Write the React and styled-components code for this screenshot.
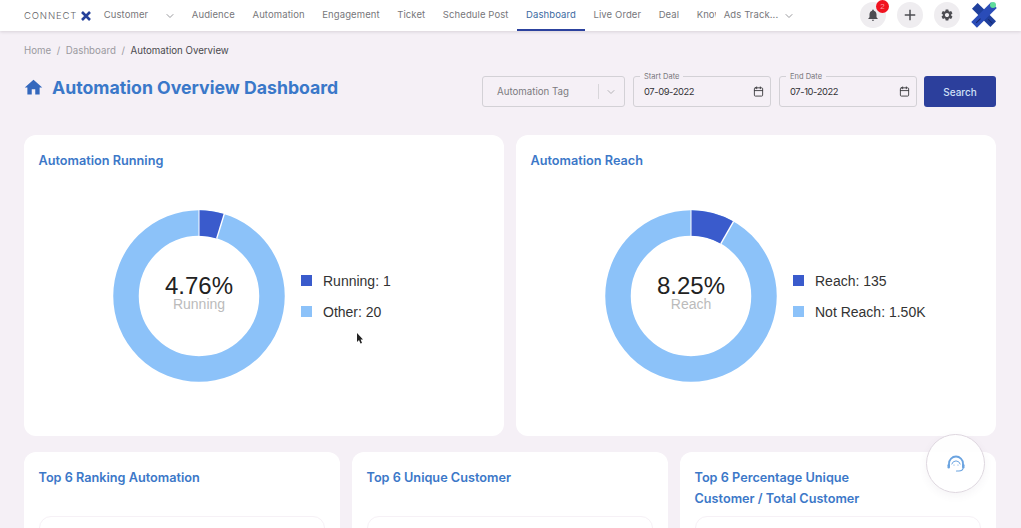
import styled, { createGlobalStyle } from "styled-components";
import { MdHome, MdNotifications, MdSettings, MdAdd } from "react-icons/md";
import { ChevronDown, Calendar } from "lucide-react";

const GlobalStyle = createGlobalStyle`
  html, body {
    margin: 0;
    height: 528px;
    overflow: hidden;
    background: #f5f0f6;
    font-family: "Inter", "Liberation Sans", sans-serif;
  }
  * { box-sizing: border-box; }
`;

const Page = styled.div`
  height: 528px;
  overflow: hidden;
  background: #f5f0f6;
`;

const NavBar = styled.header`
  display: flex;
  align-items: center;
  height: 31px;
  padding: 0 0 0 24px;
  background: #fff;
  box-shadow: 0 1px 3px rgba(60, 50, 70, 0.16);
`;

const Brand = styled.div`
  display: flex;
  align-items: center;
  gap: 4px;
  width: 71px;
  flex-shrink: 0;
  font-size: 9.5px;
  font-weight: 300;
  letter-spacing: 0.85px;
  color: #5f5f64;
`;

const NavTabs = styled.nav`
  display: flex;
  align-items: center;
  height: 31px;
  flex-shrink: 0;
`;

const NavTab = styled.a`
  display: flex;
  align-items: center;
  height: 31px;
  padding: 0 8.75px;
  font-size: 9.5px;
  letter-spacing: 0.1px;
  white-space: nowrap;
  overflow: hidden;
  color: ${(p) => (p.$active ? "#3c6a9f" : "#77777b")};
  border-bottom: 2px solid ${(p) => (p.$active ? "#2c429e" : "transparent")};
  width: ${(p) => p.$width || "auto"};
  margin-left: ${(p) => p.$left || 0}px;
  flex-shrink: 0;
`;

const NavChevron = styled(ChevronDown)`
  color: #9a9a9e;
  flex-shrink: 0;
  margin-left: ${(p) => p.$left}px;
  margin-right: ${(p) => p.$right}px;
`;

const NavActions = styled.div`
  display: flex;
  align-items: center;
  gap: 11px;
  margin-left: auto;
  margin-top: -2px;
  padding-right: 24px;
`;

const RoundAction = styled.button`
  position: relative;
  display: flex;
  align-items: center;
  justify-content: center;
  width: 26px;
  height: 26px;
  padding: 0;
  border: 0;
  border-radius: 50%;
  background: #efedf0;
  color: #4d4d52;
`;

const Badge = styled.span`
  position: absolute;
  top: -2px;
  right: -3px;
  width: 13px;
  height: 13px;
  border-radius: 50%;
  background: #f0121f;
  color: #ff9aa2;
  font-size: 8px;
  line-height: 13px;
  text-align: center;
`;

const Avatar = styled.div`
  position: relative;
  width: 26px;
  height: 26px;
`;

const OnlineDot = styled.span`
  position: absolute;
  top: 0;
  right: 1px;
  width: 6px;
  height: 6px;
  border-radius: 50%;
  background: #5fdc9c;
`;

const Content = styled.main`
  padding: 0 25px 0 24px;
`;

const Breadcrumb = styled.div`
  display: flex;
  align-items: center;
  gap: 5.6px;
  height: 38px;
  font-size: 9.7px;
  color: #9b9a9f;
`;

const Crumb = styled.span`
  color: ${(p) => (p.$current ? "#4a4a4e" : "#9b9a9f")};
`;

const HeaderRow = styled.div`
  display: flex;
  align-items: center;
  justify-content: space-between;
  height: 36px;
  margin-bottom: 30px;
`;

const PageTitle = styled.h1`
  display: flex;
  align-items: center;
  gap: 8px;
  margin: 0;
  font-size: 17.7px;
  font-weight: 700;
  color: #3a78c9;
`;

const TitleIcon = styled(MdHome)`
  color: #3468bd;
  margin-left: -1px;
`;

const Filters = styled.div`
  display: flex;
  align-items: center;
  gap: 8px;
  padding-top: 9px;
`;

const TagSelect = styled.div`
  display: flex;
  align-items: center;
  width: 143px;
  height: 31px;
  padding: 0 7px 0 14px;
  border: 1px solid #d3d1d6;
  border-radius: 3px;
  font-size: 9.7px;
  color: #7c7b80;
`;

const TagText = styled.span`
  flex: 1;
`;

const SelectDivider = styled.span`
  width: 1px;
  height: 15px;
  margin-right: 6px;
  background: #d8d6da;
`;

const DateField = styled.div`
  position: relative;
  display: flex;
  align-items: center;
  justify-content: space-between;
  width: 138px;
  height: 31px;
  padding: 0 6px 0 10px;
  border: 1px solid #d3d1d6;
  border-radius: 3px;
  font-size: 9.4px;
  letter-spacing: -0.4px;
  color: #333336;
`;

const DateLabel = styled.label`
  position: absolute;
  top: -5px;
  left: 6px;
  padding: 0 4px;
  background: #f5f0f6;
  font-size: 7.5px;
  line-height: 9px;
  letter-spacing: 0;
  color: #77767b;
`;

const SearchButton = styled.button`
  width: 72px;
  height: 31px;
  margin-left: -1px;
  border: 0;
  border-radius: 3px;
  background: #2c3f9c;
  color: #cfe0f7;
  font-family: inherit;
  font-size: 10px;
  font-weight: 500;
`;

const ChartGrid = styled.section`
  display: grid;
  grid-template-columns: 480px 480px;
  gap: 12px;
  margin-bottom: 16px;
`;

const Card = styled.article`
  padding: 15px 15px 15px 14.5px;
  background: #fff;
  border-radius: 12px;
  height: ${(p) => p.$height}px;
`;

const CardTitle = styled.h2`
  margin: 0;
  font-size: 12.7px;
  line-height: 21px;
  font-weight: 600;
  color: #3c78c8;
  min-height: ${(p) => p.$minHeight || 0}px;
`;

const ChartRow = styled.div`
  display: flex;
  align-items: center;
  gap: 16px;
  margin-top: 39px;
  padding-left: 74.5px;
  font-family: "Liberation Sans", Arial, sans-serif;
`;

const Legend = styled.ul`
  display: flex;
  flex-direction: column;
  gap: 15px;
  margin: 0;
  padding: 0;
  list-style: none;
`;

const LegendItem = styled.li`
  display: flex;
  align-items: center;
  gap: 11px;
  height: 16px;
  font-size: 14px;
  color: #333;
`;

const Swatch = styled.span`
  width: 11px;
  height: 11px;
  background: ${(p) => p.$color};
`;

const BottomGrid = styled.section`
  display: grid;
  grid-template-columns: repeat(3, 316px);
  gap: 12px;
`;

const InnerBox = styled.div`
  height: 80px;
  margin-top: 7px;
  border: 1px solid #f6f1f6;
  border-radius: 12px;
`;

const HelpButton = styled.button`
  position: fixed;
  left: 926px;
  top: 434px;
  display: flex;
  align-items: center;
  justify-content: center;
  width: 59px;
  height: 59px;
  padding: 0;
  border: 1px solid #ddd6de;
  border-radius: 50%;
  background: rgba(255, 255, 255, 0.9);
  box-shadow: 0 3px 8px rgba(90, 70, 100, 0.06);
`;

const Pointer = styled.svg`
  position: fixed;
  left: 356px;
  top: 332px;
`;

const DARK = "#3a5bcc";
const LIGHT = "#8cc2f9";

function LogoMark({ size }) {
  return (
    <svg width={size} height={size} viewBox="0 0 26 26">
      <g transform="rotate(45 13 13)">
        <rect x="0" y="9" width="26" height="8" fill="#1f3f9c" />
        <rect x="9" y="-1" width="8" height="28" fill="#2a4cb8" />
        <rect x="12.5" y="18" width="1" height="6" fill="#16276b" />
        <rect x="19" y="12.5" width="6" height="1" fill="#16276b" />
      </g>
    </svg>
  );
}

function HelpIcon() {
  return (
    <svg width="20" height="18" viewBox="0 0 20 18" fill="none" stroke="#6aa3e0" strokeLinecap="round">
      <path d="M3 11 V8.5 A7 7 0 0 1 17 8.5 V11" strokeWidth="1.8" />
      <path d="M5.8 9 A4.4 4.4 0 0 1 14.2 9" strokeWidth="1" />
      <rect x="1.5" y="9" width="2.4" height="4.5" rx="1.2" fill="#6aa3e0" strokeWidth="0" />
      <rect x="16.1" y="9" width="2.4" height="4.5" rx="1.2" fill="#6aa3e0" strokeWidth="0" />
      <path d="M17 13.5 Q16.5 16 13 16 H10.5" strokeWidth="1.2" />
      <circle cx="8" cy="10" r="0.6" fill="#6aa3e0" strokeWidth="0" />
      <circle cx="12" cy="10" r="0.6" fill="#6aa3e0" strokeWidth="0" />
    </svg>
  );
}

function Donut({ percent, value, label }) {
  const c = 86;
  const r = 73;
  const circ = 2 * Math.PI * r;
  const angle = (percent / 100) * 2 * Math.PI;
  const x0 = c + 60 * Math.sin(angle);
  const y0 = c - 60 * Math.cos(angle);
  const x1 = c + 86 * Math.sin(angle);
  const y1 = c - 86 * Math.cos(angle);
  return (
    <svg width="172" height="172" viewBox="0 0 172 172">
      <circle cx={c} cy={c} r={r} fill="none" stroke={LIGHT} strokeWidth="25.5" />
      <circle
        cx={c}
        cy={c}
        r={r}
        fill="none"
        stroke={DARK}
        strokeWidth="25.5"
        strokeDasharray={`${(percent / 100) * circ} ${circ}`}
        transform={`rotate(-90 ${c} ${c})`}
      />
      <line x1={c} y1="0" x2={c} y2="26" stroke="#fff" strokeWidth="1" />
      <line x1={x0} y1={y0} x2={x1} y2={y1} stroke="#fff" strokeWidth="1.4" />
      <text x={c} y="84" textAnchor="middle" fontSize="24" fill="#222">
        {value}
      </text>
      <text x={c} y="99" textAnchor="middle" fontSize="14" fill="#bbb">
        {label}
      </text>
    </svg>
  );
}

function ChartCard({ title, percent, value, label, items }) {
  return (
    <Card $height={301}>
      <CardTitle>{title}</CardTitle>
      <ChartRow>
        <Donut percent={percent} value={value} label={label} />
        <Legend>
          {items.map((item) => (
            <LegendItem key={item.text}>
              <Swatch $color={item.color} />
              {item.text}
            </LegendItem>
          ))}
        </Legend>
      </ChartRow>
    </Card>
  );
}

export default function App() {
  return (
    <Page>
      <GlobalStyle />
      <NavBar>
        <Brand>
          CONNECT
          <svg width="10" height="10" viewBox="0 0 10 10">
            <path d="M1 1 L9 9 M9 1 L1 9" stroke="#24409a" strokeWidth="2.6" />
          </svg>
        </Brand>
        <NavTabs>
          <NavTab>Customer</NavTab>
          <NavChevron size={12} $left={7} $right={7} />
          <NavTab>Audience</NavTab>
          <NavTab>Automation</NavTab>
          <NavTab>Engagement</NavTab>
          <NavTab>Ticket</NavTab>
          <NavTab>Schedule Post</NavTab>
          <NavTab $active>Dashboard</NavTab>
          <NavTab>Live Order</NavTab>
          <NavTab>Deal</NavTab>
          <NavTab $width="28px">Knowledge</NavTab>
          <NavTab $left={-1}>Ads Track...</NavTab>
          <NavChevron size={12} $left={-4} $right={0} />
        </NavTabs>
        <NavActions>
          <RoundAction>
            <MdNotifications size={14} />
            <Badge>2</Badge>
          </RoundAction>
          <RoundAction>
            <MdAdd size={18} />
          </RoundAction>
          <RoundAction>
            <MdSettings size={14} />
          </RoundAction>
          <Avatar>
            <LogoMark size={26} />
            <OnlineDot />
          </Avatar>
        </NavActions>
      </NavBar>

      <Content>
        <Breadcrumb>
          <Crumb>Home</Crumb>
          <span>/</span>
          <Crumb>Dashboard</Crumb>
          <span>/</span>
          <Crumb $current>Automation Overview</Crumb>
        </Breadcrumb>

        <HeaderRow>
          <PageTitle>
            <TitleIcon size={21} />
            Automation Overview Dashboard
          </PageTitle>
          <Filters>
            <TagSelect>
              <TagText>Automation Tag</TagText>
              <SelectDivider />
              <ChevronDown size={12} color="#b5b4b8" />
            </TagSelect>
            <DateField>
              <DateLabel>Start Date</DateLabel>
              07-09-2022
              <Calendar size={11} color="#3c3c40" />
            </DateField>
            <DateField>
              <DateLabel>End Date</DateLabel>
              07-10-2022
              <Calendar size={11} color="#3c3c40" />
            </DateField>
            <SearchButton>Search</SearchButton>
          </Filters>
        </HeaderRow>

        <ChartGrid>
          <ChartCard
            title="Automation Running"
            percent={4.76}
            value="4.76%"
            label="Running"
            items={[
              { text: "Running: 1", color: DARK },
              { text: "Other: 20", color: LIGHT },
            ]}
          />
          <ChartCard
            title="Automation Reach"
            percent={8.25}
            value="8.25%"
            label="Reach"
            items={[
              { text: "Reach: 135", color: DARK },
              { text: "Not Reach: 1.50K", color: LIGHT },
            ]}
          />
        </ChartGrid>

        <BottomGrid>
          <Card $height={120}>
            <CardTitle $minHeight={42}>Top 6 Ranking Automation</CardTitle>
            <InnerBox />
          </Card>
          <Card $height={120}>
            <CardTitle $minHeight={42}>Top 6 Unique Customer</CardTitle>
            <InnerBox />
          </Card>
          <Card $height={120}>
            <CardTitle $minHeight={42}>
              Top 6 Percentage Unique
              <br />
              Customer / Total Customer
            </CardTitle>
            <InnerBox />
          </Card>
        </BottomGrid>
      </Content>

      <HelpButton>
        <HelpIcon />
      </HelpButton>
      <Pointer width="8" height="13" viewBox="0 0 8 13">
        <path d="M1 1 L1 10 L3 8 L4.5 11.5 L6 11 L4.6 7.6 L7 7.4 Z" fill="#222" />
      </Pointer>
    </Page>
  );
}
